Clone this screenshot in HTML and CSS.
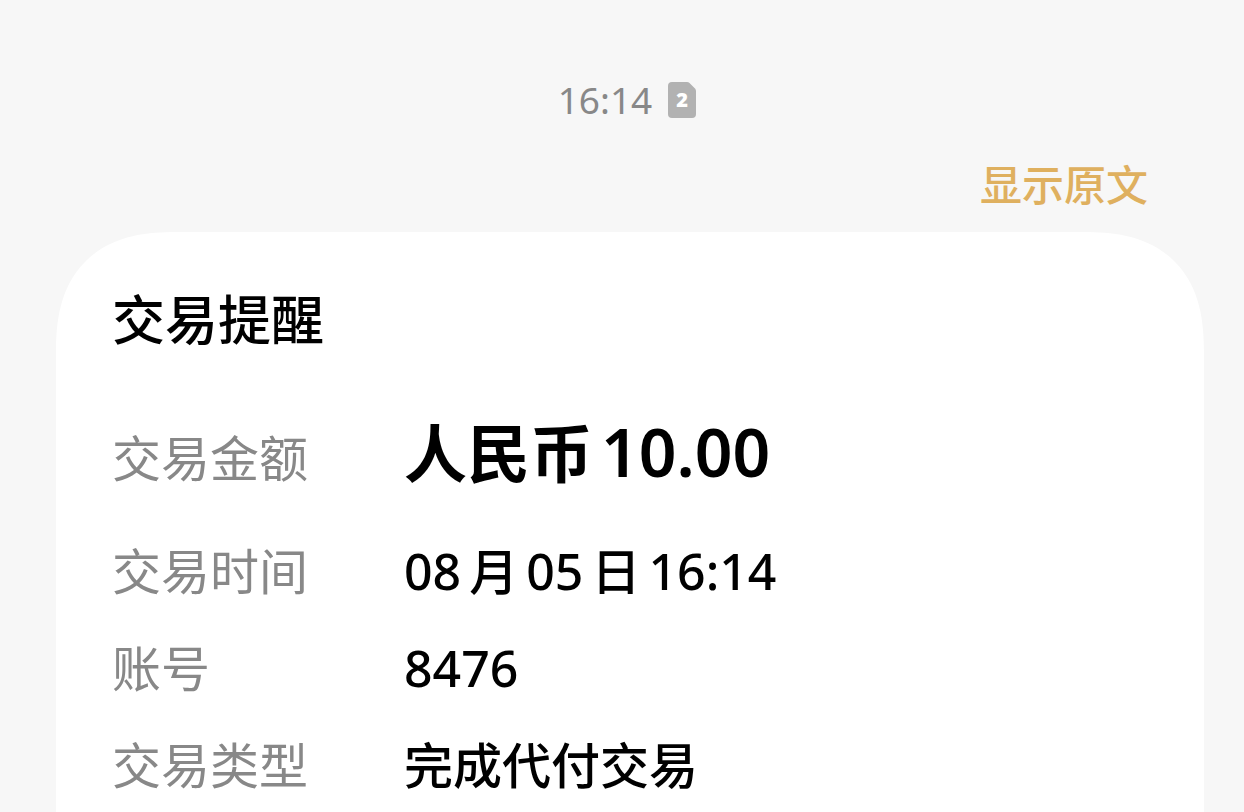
FILE: index.html
```html
<!DOCTYPE html>
<html lang="zh-CN">
<head>
    <meta charset="UTF-8">
    <meta name="viewport" content="width=device-width, initial-scale=1.0">
    <title>交易提醒</title>
    <link rel="stylesheet" href="styles.css">
</head>
<body>

<div class="message-time">
    <time>16:14</time>
    <svg class="sim-icon" viewBox="0 0 28 36" aria-hidden="true">
        <path d="M4 0H19Q20.500 0 21.500 1L27 6.500Q28 7.500 28 9V32Q28 36 24 36H4Q0 36 0 32V4Q0 0 4 0Z" fill="#b2b2b2"/>
        <text class="sim-number" x="14" y="25" text-anchor="middle">2</text>
    </svg>
</div>

<div class="actions">
    <button class="original-button" type="button">显示原文</button>
</div>

<main class="card">
    <h1>交易提醒</h1>
    <dl class="details">
        <div class="row amount">
            <dt>交易金额</dt>
            <dd><span>人民币</span><span class="num">10.00</span></dd>
        </div>
        <div class="row">
            <dt>交易时间</dt>
            <dd><span class="num">08</span><span>月</span><span class="num">05</span><span>日</span><span class="num">16:14</span></dd>
        </div>
        <div class="row">
            <dt>账号</dt>
            <dd><span class="num">8476</span></dd>
        </div>
        <div class="row">
            <dt>交易类型</dt>
            <dd>完成代付交易</dd>
        </div>
    </dl>
</main>

</body>
</html>
```

FILE: styles.css
```css
* {
    box-sizing: border-box;
}
body {
    font-family: "Noto Sans", "Noto Sans CJK SC", sans-serif;
    margin: 0;
    padding: 70px 40px 0 56px;
    min-height: 100vh;
    display: flex;
    flex-direction: column;
    background-color: #f7f7f7;
    color: #000;
}
.message-time {
    display: flex;
    align-items: center;
    justify-content: center;
    gap: 16px;
    padding-right: 6px;
    font-size: 37px;
    line-height: 60px;
    color: #888;
}
.sim-icon {
    width: 28px;
    height: 36px;
}
.sim-number {
    font-size: 20px;
    font-weight: 900;
    fill: #fff;
}
.actions {
    display: flex;
    justify-content: flex-end;
    margin-top: 25px;
    padding-right: 56px;
}
.original-button {
    font-family: inherit;
    font-size: 42px;
    font-weight: 500;
    line-height: 60px;
    padding: 0;
    border: none;
    background: none;
    color: #dfb05f;
    cursor: pointer;
}
.card {
    flex: 1;
    margin-top: 17px;
    padding: 58px 56px 16px;
    border-radius: 100px 100px 0 0;
    background-color: #fff;
}
@supports (corner-shape: superellipse(1.3)) {
    .card {
        border-radius: 120px 120px 0 0;
        corner-shape: superellipse(1.3);
    }
}
.card h1 {
    margin: 0;
    font-size: 53px;
    font-weight: 500;
    line-height: 60px;
}
.details {
    display: flex;
    flex-direction: column;
    gap: 37px;
    margin: 61px 0 0;
    font-size: 49px;
    line-height: 60px;
}
.row {
    display: flex;
    align-items: baseline;
}
.row dt {
    flex: 0 0 292px;
    color: #888;
}
.row dd {
    display: flex;
    align-items: baseline;
    gap: 8px;
    margin: 0;
    font-weight: 500;
}
.num {
    font-size: 50px;
}
.amount {
    margin-bottom: 6px;
    line-height: 80px;
}
.amount dd {
    font-size: 63px;
    font-weight: 700;
}
.amount .num {
    font-size: 66px;
    font-weight: 600;
}
```
